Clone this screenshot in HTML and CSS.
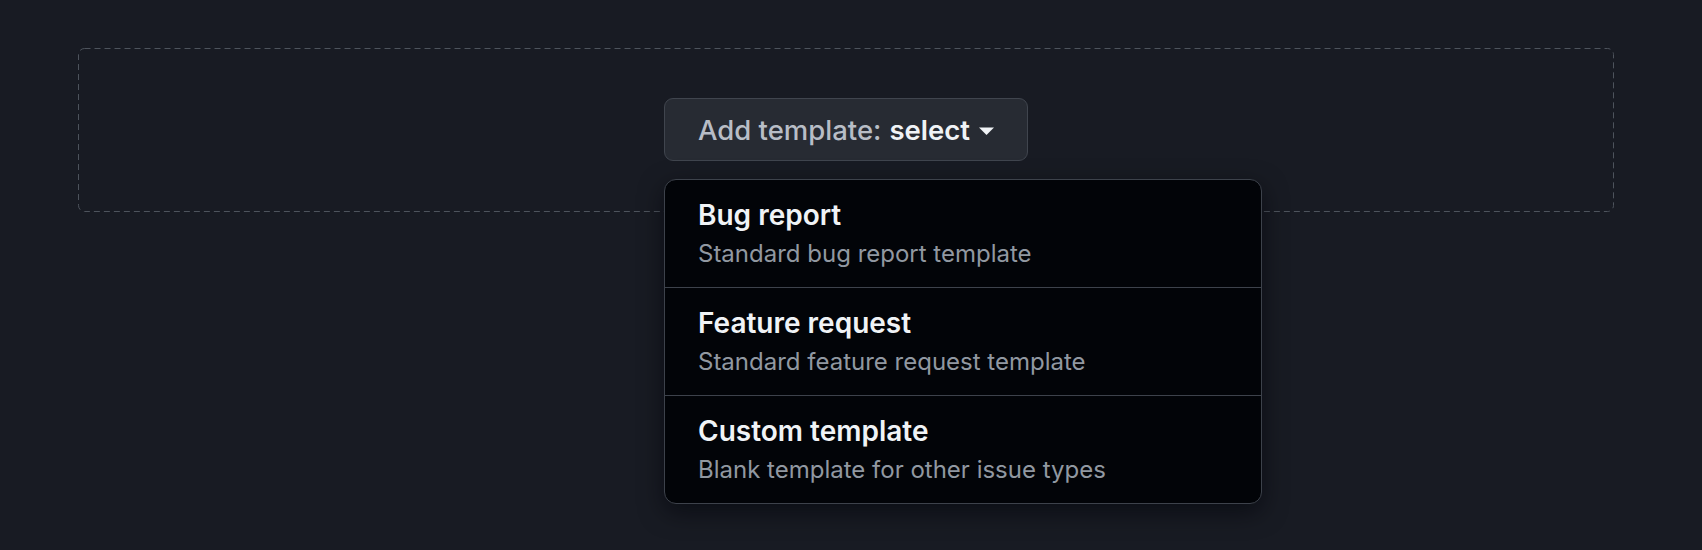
FILE: index.html
```html
<!DOCTYPE html>
<html lang="en">
<head>
<meta charset="utf-8">
<title>Add template</title>
<link rel="stylesheet" href="styles.css">
</head>
<body>
<main class="page">
  <section class="dropzone">
    <svg class="dash-frame" aria-hidden="true"><rect class="dash-rect" x="0.5" y="0.5" rx="6" ry="6"/></svg>
    <div class="picker">
      <button class="picker-button" type="button">
        <span class="picker-label">Add template:</span>
        <span class="picker-value">select</span>
        <svg class="caret" width="15" height="8" viewBox="0 0 15 8" aria-hidden="true"><path d="M0 0.5 H15 L7.5 8 Z" fill="currentColor"/></svg>
      </button>
      <ul class="menu">
        <li class="menu-item">
          <div class="item-title">Bug report</div>
          <div class="item-desc">Standard bug report template</div>
        </li>
        <li class="menu-item">
          <div class="item-title">Feature request</div>
          <div class="item-desc">Standard feature request template</div>
        </li>
        <li class="menu-item">
          <div class="item-title">Custom template</div>
          <div class="item-desc">Blank template for other issue types</div>
        </li>
      </ul>
    </div>
  </section>
</main>
</body>
</html>
```

FILE: styles.css
```css
* { box-sizing: border-box; }
html, body {
  margin: 0;
  padding: 0;
  background: #181b23;
  height: 100%;
}
body {
  font-family: Inter, "Noto Sans", "Liberation Sans", sans-serif;
  color: #f0f3f6;
}
.page {
  padding: 48px 0 0 78px;
}
.dropzone {
  position: relative;
  width: 1536px;
  border-radius: 6px;
  padding: 50px 0 51px;
  display: flex;
  justify-content: center;
}
.dash-frame {
  position: absolute;
  left: 0;
  top: 0;
  width: 100%;
  height: 100%;
  pointer-events: none;
}
.dash-rect {
  width: calc(100% - 1px);
  height: calc(100% - 1px);
  fill: none;
  stroke: #4d535c;
  stroke-width: 1;
  stroke-dasharray: 6 4;
}
.picker {
  position: relative;
}
.picker-button {
  display: inline-flex;
  align-items: center;
  height: 63px;
  padding: 0 33px;
  background: #272b33;
  border: 1px solid #40454e;
  border-radius: 9px;
  font-family: inherit;
  font-size: 27.5px;
  color: #b8bdc6;
  cursor: pointer;
}
.picker-label {
  font-weight: 500;
  margin-right: 8px;
}
.picker-value {
  font-weight: 600;
  color: #f0f3f6;
}
.caret {
  margin-left: 9px;
  color: #f0f3f6;
  margin-top: 2px;
}
.menu {
  position: absolute;
  top: calc(100% + 18px);
  left: 0;
  width: 598px;
  margin: 0;
  padding: 0;
  list-style: none;
  background: #020408;
  border: 1px solid #3d424b;
  border-radius: 12px;
  box-shadow: 0 8px 24px rgba(1, 4, 9, 0.55);
  z-index: 2;
}
.menu-item {
  padding: 17px 33px 15px;
  border-top: 1px solid #3d424b;
}
.menu-item:first-child {
  border-top: none;
}
.item-title {
  font-size: 28px;
  font-weight: 600;
  line-height: 36px;
  color: #f0f3f6;
}
.item-desc {
  margin-top: 3px;
  font-size: 24px;
  line-height: 36px;
  color: #9198a1;
}
```
